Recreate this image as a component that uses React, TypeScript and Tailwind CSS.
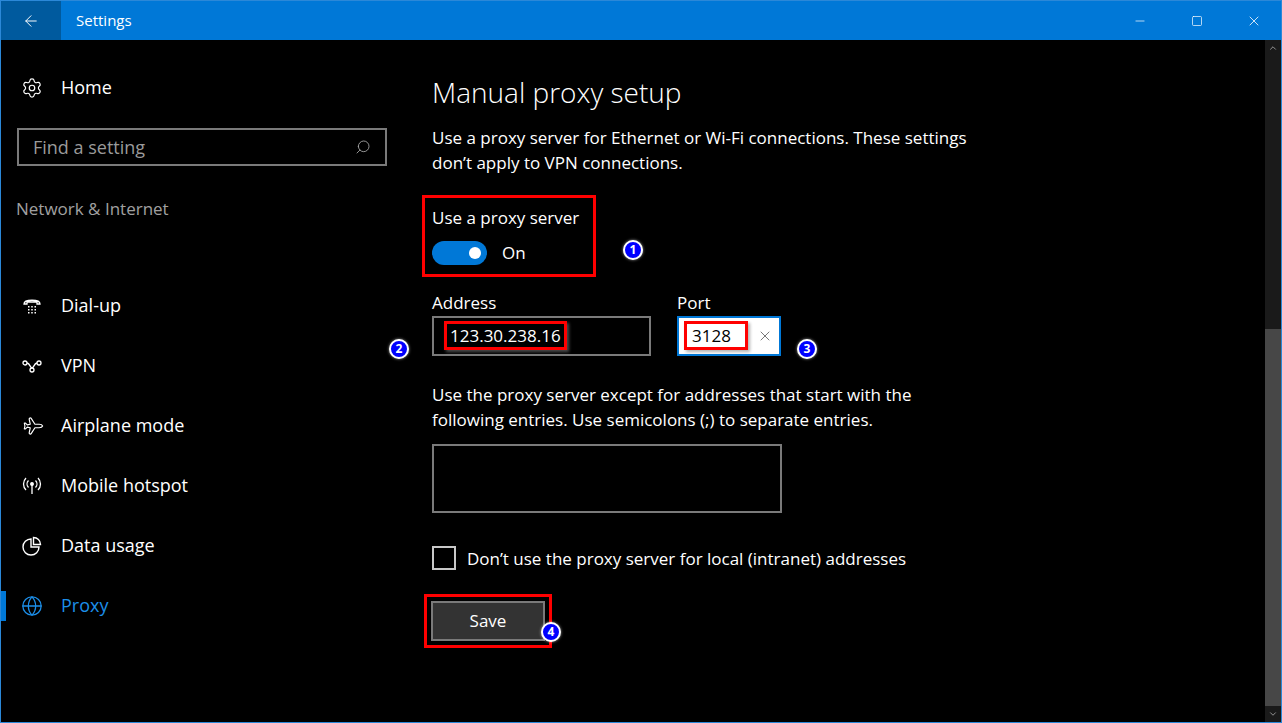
import { ArrowLeft, Minus, Square, X, Search, Settings, Plane, Globe, ChevronUp, ChevronDown } from 'lucide-react'

const font = { fontFamily: '"Segoe UI", "Open Sans", "Noto Sans", sans-serif' }

function Badge({ n, className }: { n: number; className: string }) {
  return (
    <span
      className={`absolute flex h-[20px] w-[20px] items-center justify-center rounded-full border-2 border-white bg-[#0000ff] text-[12px] font-bold leading-none text-white shadow-[0_0_3px_rgba(255,255,255,0.6)] ${className}`}
    >
      {n}
    </span>
  )
}

function DialIcon() {
  return (
    <svg width="20" height="20" viewBox="0 0 20 20" fill="none" stroke="white" strokeWidth="1.3">
      <path d="M2 8 C2 3 18 3 18 8 L15 8 L15 6 L5 6 L5 8 Z" />
      <g fill="white" stroke="none">
        <rect x="6" y="10" width="1.5" height="1.5" />
        <rect x="9.25" y="10" width="1.5" height="1.5" />
        <rect x="12.5" y="10" width="1.5" height="1.5" />
        <rect x="6" y="13" width="1.5" height="1.5" />
        <rect x="9.25" y="13" width="1.5" height="1.5" />
        <rect x="12.5" y="13" width="1.5" height="1.5" />
        <rect x="6" y="16" width="1.5" height="1.5" />
        <rect x="9.25" y="16" width="1.5" height="1.5" />
        <rect x="12.5" y="16" width="1.5" height="1.5" />
      </g>
    </svg>
  )
}

function VpnIcon() {
  return (
    <svg width="22" height="20" viewBox="0 0 22 20" fill="none" stroke="white" strokeWidth="1.3">
      <circle cx="4" cy="7" r="2" />
      <circle cx="18" cy="7" r="2" />
      <circle cx="11" cy="14" r="2" />
      <path d="M6 7 C9 7 9 12 11 12 M16 7 C13 7 13 12 11 12" />
    </svg>
  )
}

function HotspotIcon() {
  return (
    <svg width="20" height="20" viewBox="0 0 20 20" fill="none" stroke="white" strokeWidth="1.3">
      <circle cx="10" cy="8" r="1.3" fill="white" />
      <path d="M10 9 V18" />
      <path d="M6.5 4.5 A5 5 0 0 0 6.5 11.5 M13.5 4.5 A5 5 0 0 1 13.5 11.5" />
      <path d="M4 2 A8.5 8.5 0 0 0 4 14 M16 2 A8.5 8.5 0 0 1 16 14" />
    </svg>
  )
}

function DataIcon() {
  return (
    <svg width="20" height="20" viewBox="0 0 20 20" fill="none" stroke="white" strokeWidth="1.4">
      <path d="M9 3 A8 8 0 1 0 17 11 L9 11 Z" />
      <path d="M11.5 1.5 A7 7 0 0 1 18.5 8.5 L11.5 8.5 Z" />
    </svg>
  )
}

const navItems = [
  { label: 'Dial-up', icon: <DialIcon /> },
  { label: 'VPN', icon: <VpnIcon /> },
  { label: 'Airplane mode', icon: <Plane size={20} strokeWidth={1.4} className="rotate-45" /> },
  { label: 'Mobile hotspot', icon: <HotspotIcon /> },
  { label: 'Data usage', icon: <DataIcon /> },
]

export default function App() {
  return (
    <div className="flex h-[723px] w-[1282px] flex-col overflow-hidden border border-[#2b88d8] bg-black text-white" style={font}>
      {/* Title bar */}
      <div className="flex h-[39px] shrink-0 items-center bg-[#0078d7]">
        <div className="flex h-full w-[60px] items-center justify-center bg-[#005a9e]">
          <ArrowLeft size={18} strokeWidth={1.3} />
        </div>
        <span className="ml-[15px] text-[15px]">Settings</span>
        <div className="ml-auto flex h-full">
          <div className="flex w-[46px] items-center justify-center"><Minus size={14} strokeWidth={1.2} /></div>
          <div className="ml-[11px] flex w-[46px] items-center justify-center"><Square size={12} strokeWidth={1.4} /></div>
          <div className="ml-[11px] mr-[4px] flex w-[46px] items-center justify-center"><X size={16} strokeWidth={1.2} /></div>
        </div>
      </div>

      <div className="flex flex-1">
        {/* Sidebar */}
        <div className="w-[400px] shrink-0">
          <div className="mt-[34px] flex items-center pl-[20px] text-[18px]">
            <Settings size={22} strokeWidth={1.3} />
            <span className="ml-[18px]">Home</span>
          </div>
          <div className="ml-[16px] mt-[27px] flex h-[38px] w-[370px] items-center border-2 border-[#7a7a7a] px-[14px]">
            <span className="text-[18px] text-[#9a9a9a]">Find a setting</span>
            <Search size={16} strokeWidth={1.3} className="ml-auto -scale-x-100 text-[#aaa]" />
          </div>
          <div className="ml-[15px] mt-[30px] text-[17px] text-[#a0a0a0]">Network &amp; Internet</div>
          <div className="mt-[54px] flex flex-col">
            {navItems.map((it) => (
              <div key={it.label} className="flex h-[60px] items-center pl-[20px] text-[18px]">
                <span className="flex w-[22px] justify-center">{it.icon}</span>
                <span className="ml-[18px]">{it.label}</span>
              </div>
            ))}
            <div className="flex h-[60px] items-center text-[18px] text-[#1c8ee8]">
              <span className="h-[30px] w-[5px] bg-[#0078d7]" />
              <span className="ml-[15px] flex w-[22px] justify-center"><Globe size={22} strokeWidth={1.4} /></span>
              <span className="ml-[18px]">Proxy</span>
            </div>
          </div>
        </div>

        {/* Content */}
        <div className="relative flex-1 pl-[31px]">
          <h1 className="mt-[33px] text-[28px] font-light leading-[38px]">Manual proxy setup</h1>
          <p className="mt-[14px] w-[570px] text-[17px] leading-[25px]">
            Use a proxy server for Ethernet or Wi-Fi connections. These settings don’t apply to VPN connections.
          </p>

          <div className="-ml-[10px] mt-[20px] w-[174px] border-[3px] border-[#ff0000] pb-[8px] pl-[7px] pt-[8px]">
            <div className="text-[17px] leading-[24px]">Use a proxy server</div>
            <div className="mt-[10px] flex items-center">
              <div className="flex h-[24px] w-[55px] items-center justify-end rounded-full bg-[#0078d7] pr-[6px]">
                <span className="h-[12px] w-[12px] rounded-full bg-white" />
              </div>
              <span className="ml-[15px] text-[17px]">On</span>
            </div>
          </div>
          <Badge n={1} className="left-[222px] top-[200px]" />

          <div className="mt-[14px] flex gap-[26px]">
            <div>
              <div className="text-[17px] leading-[24px]">Address</div>
              <div className="mt-[1px] flex h-[40px] w-[219px] items-center border-2 border-[#7a7a7a] pl-[10px]">
                <span className="border-[3px] border-[#ff0000] px-[3px] text-[17px] leading-[23px] shadow-[2px_2px_3px_rgba(255,255,255,0.3)]">123.30.238.16</span>
              </div>
            </div>
            <div>
              <div className="text-[17px] leading-[24px]">Port</div>
              <div className="mt-[1px] flex h-[40px] w-[104px] items-center border-2 border-[#0078d7] bg-white pl-[5px] text-black">
                <span className="w-[64px] border-[3px] border-[#ff0000] px-[5px] text-[17px] leading-[23px] shadow-[2px_2px_3px_rgba(0,0,0,0.3)]">3128</span>
                <X size={16} strokeWidth={1.2} className="ml-[9px] text-[#555]" />
              </div>
            </div>
          </div>
          <Badge n={2} className="left-[-12px] top-[299px]" />
          <Badge n={3} className="left-[396px] top-[299px]" />

          <p className="mt-[26px] w-[520px] text-[17px] leading-[25px]">
            Use the proxy server except for addresses that start with the following entries. Use semicolons (;) to separate entries.
          </p>
          <div className="mt-[12px] h-[69px] w-[350px] border-2 border-[#7a7a7a]" />

          <div className="mt-[33px] flex items-center">
            <span className="h-[24px] w-[24px] border-2 border-[#c8c8c8]" />
            <span className="ml-[11px] text-[17px]">Don’t use the proxy server for local (intranet) addresses</span>
          </div>

          <div className="-ml-[8px] mt-[23px] w-[128px] border-[3px] border-[#ff0000] p-[4px]">
            <div className="flex h-[40px] items-center justify-center border-2 border-[#7a7a7a] bg-[#333333] text-[17px]">Save</div>
          </div>
          <Badge n={4} className="left-[140px] top-[582px]" />
        </div>

        {/* Scrollbar */}
        <div className="flex w-[16px] shrink-0 flex-col bg-[#1a1a1a]">
          <div className="flex h-[16px] items-center justify-center"><ChevronUp size={10} className="text-[#aaa]" /></div>
          <div className="flex-1" />
          <div className="h-[377px] bg-[#474747]" />
          <div className="flex h-[16px] items-center justify-center"><ChevronDown size={10} className="text-[#aaa]" /></div>
        </div>
      </div>
    </div>
  )
}
